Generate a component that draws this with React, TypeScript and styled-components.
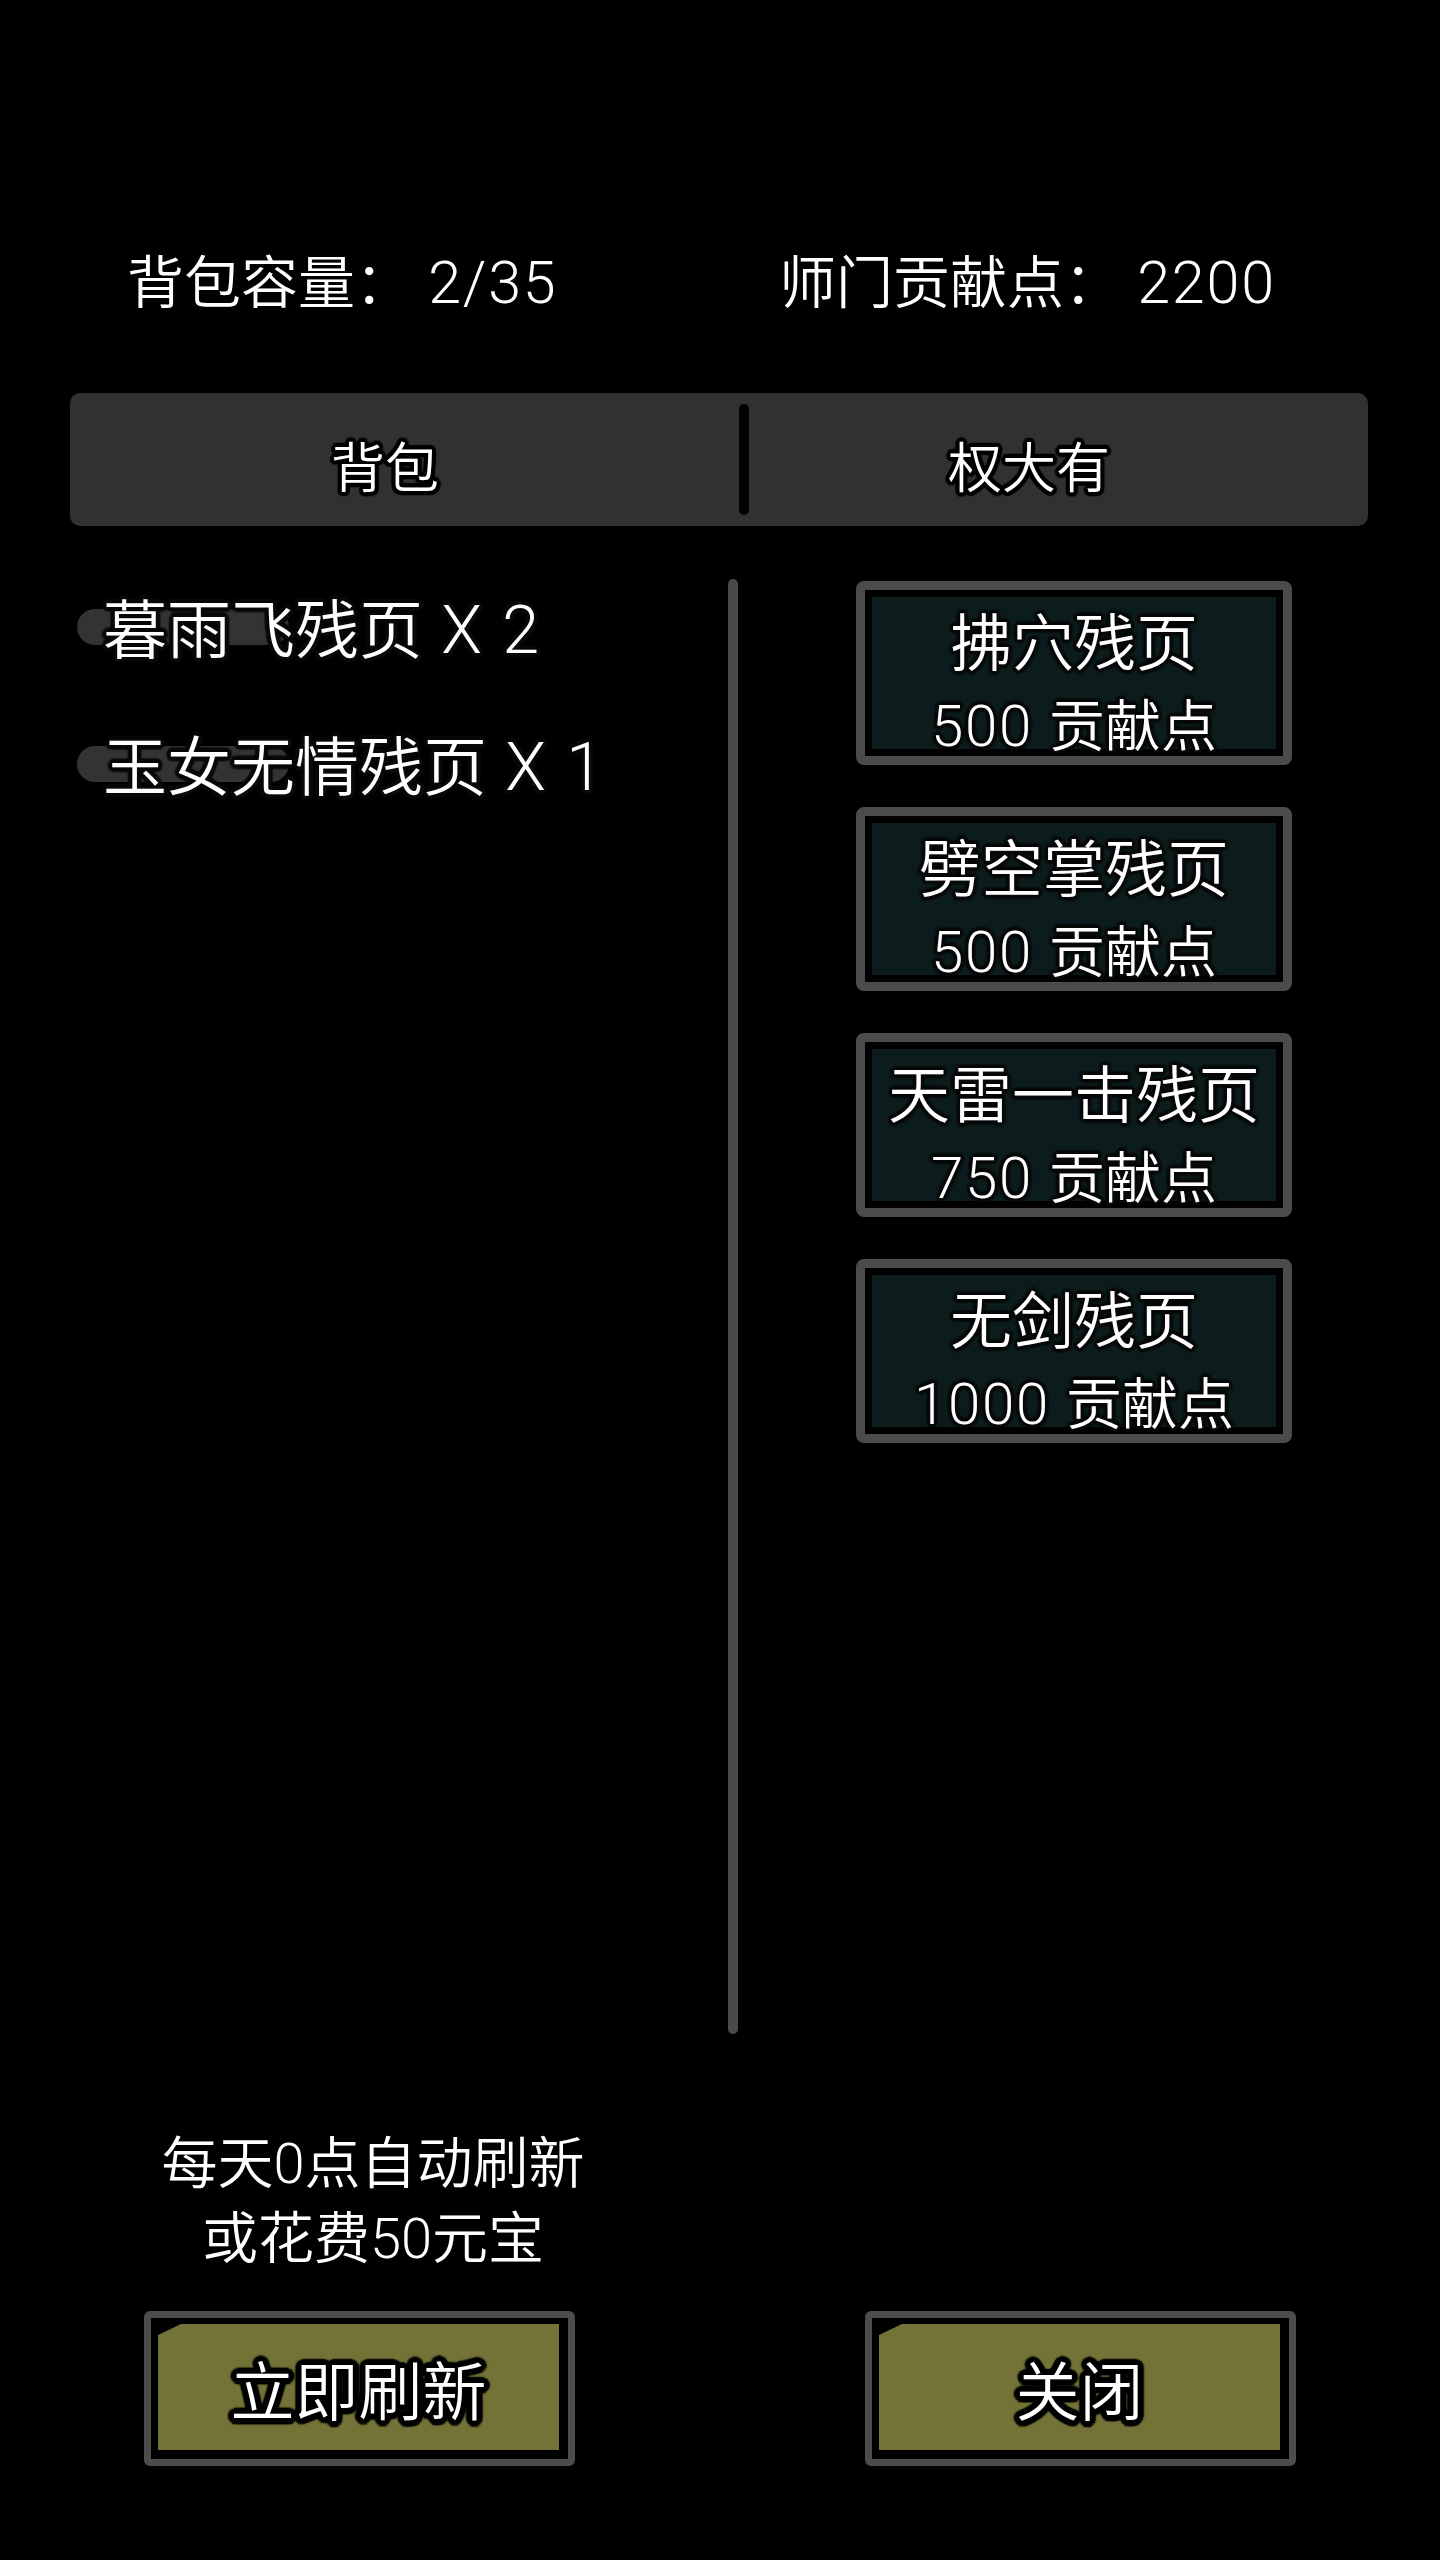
import React from "react";
import styled, { createGlobalStyle } from "styled-components";

const outline = (r: number, blur = 1, color = "#000") =>
  Array.from({ length: 16 }, (_, i) => {
    const a = (i * Math.PI) / 8;
    return `${(Math.cos(a) * r).toFixed(1)}px ${(Math.sin(a) * r).toFixed(1)}px ${blur}px ${color}`;
  }).join(", ");

const Global = createGlobalStyle`
  html, body { margin: 0; padding: 0; background: #000; }
  body {
    font-family: Roboto, "Noto Sans CJK SC", sans-serif;
    font-weight: 350;
    color: #fff;
  }
  * { box-sizing: border-box; }
`;

const Page = styled.div`
  width: 1440px;
  min-height: 2560px;
  background: #000;
  display: flex;
  flex-direction: column;
`;

const Latin = styled.span`
  font-size: 1.04em;
  letter-spacing: 0.03em;
`;

const Header = styled.div`
  display: flex;
  padding: 244px 0 0 127px;
  font-size: 57px;
  line-height: 78px;
  white-space: pre;
`;

const HeaderStat = styled.div<{ $width?: number }>`
  width: ${(p) => (p.$width ? `${p.$width}px` : "auto")};
`;

const TabBar = styled.div`
  margin: 70px 72px 0 70px;
  height: 133px;
  background: #313131;
  border-radius: 10px;
  display: grid;
  grid-template-columns: 669px 10px 1fr;
  align-items: center;
`;

const TabLabel = styled.div<{ $shift: number }>`
  text-align: center;
  padding-right: ${(p) => p.$shift}px;
  padding-top: 20px;
  font-size: 54px;
  line-height: 64px;
  text-shadow: ${outline(4, 1)};
`;

const TabDivider = styled.div`
  height: 111px;
  background: #000;
  border-radius: 5px;
`;

const Content = styled.div`
  margin-top: 53px;
  display: grid;
  grid-template-columns: 658px 10px 1fr;
  padding-left: 70px;
  height: 1455px;
`;

const ItemList = styled.div`
  padding-top: 8px;
  display: flex;
  flex-direction: column;
  gap: 49px;
`;

const Item = styled.div`
  position: relative;
  padding-left: 33px;
  font-size: 64px;
  line-height: 86px;
  white-space: pre;
  &::before {
    content: "";
    position: absolute;
    left: 7px;
    top: 50%;
    margin-top: -22px;
    width: 212px;
    height: 36px;
    border-radius: 18px;
    background: #333;
  }
`;

const ItemText = styled.span`
  position: relative;
  text-shadow: ${outline(4, 1.5, "#0a0a0a")};
`;

const ScrollTrack = styled.div`
  width: 10px;
  height: 100%;
  background: #4a4a4a;
  border-radius: 5px;
`;

const ShopColumn = styled.div`
  padding: 2px 0 0 118px;
  display: flex;
  flex-direction: column;
  gap: 42px;
`;

const ShopCard = styled.div`
  width: 436px;
  height: 184px;
  border: 9px solid #4b4b4b;
  border-radius: 8px;
  padding: 7px;
  background: #000;
`;

const CardFace = styled.div`
  height: 100%;
  background: #0c1c1c;
  display: flex;
  flex-direction: column;
  align-items: center;
  justify-content: center;
  padding-top: 22px;
  white-space: pre;
`;

const CardTitle = styled.div`
  font-size: 62px;
  line-height: 66px;
  text-shadow: ${outline(3, 1.5, "#0a0a0a")};
`;

const CardPrice = styled.div`
  margin-top: 18px;
  font-size: 56px;
  line-height: 60px;
  text-shadow: ${outline(3, 1.5, "#0a0a0a")};
`;

const Note = styled.div`
  margin: 93px 0 0 145px;
  width: 456px;
  text-align: center;
  font-size: 56px;
  line-height: 75px;
`;

const ButtonRow = styled.div`
  margin-top: 34px;
  padding-left: 144px;
  display: flex;
  gap: 290px;
`;

const GameButton = styled.div`
  width: 431px;
  height: 155px;
  border: 7px solid #4d4d4d;
  border-radius: 6px;
  background: #000;
  padding: 6px 9px 9px 7px;
`;

const ButtonFace = styled.div`
  height: 100%;
  background: #737338;
  clip-path: polygon(23px 0, 100% 0, 100% 100%, 0 100%, 0 11px);
  display: flex;
  align-items: center;
  justify-content: center;
  font-size: 64px;
  line-height: 70px;
  padding-top: 14px;
  text-shadow: ${outline(6, 1.5)};
`;

const items = [
  { name: "暮雨飞残页", count: 2 },
  { name: "玉女无情残页", count: 1 },
];

const shop = [
  { name: "拂穴残页", price: 500 },
  { name: "劈空掌残页", price: 500 },
  { name: "天雷一击残页", price: 750 },
  { name: "无剑残页", price: 1000 },
];

export default function App() {
  return (
    <>
      <Global />
      <Page>
        <Header>
          <HeaderStat $width={652}>
            背包容量：<Latin> 2/35</Latin>
          </HeaderStat>
          <HeaderStat>
            师门贡献点：<Latin> 2200</Latin>
          </HeaderStat>
        </Header>
        <TabBar>
          <TabLabel $shift={39}>背包</TabLabel>
          <TabDivider />
          <TabLabel $shift={59}>权大有</TabLabel>
        </TabBar>
        <Content>
          <ItemList>
            {items.map((it) => (
              <Item key={it.name}>
                <ItemText>
                  {it.name}
                  <Latin>{` X ${it.count}`}</Latin>
                </ItemText>
              </Item>
            ))}
          </ItemList>
          <ScrollTrack />
          <ShopColumn>
            {shop.map((s) => (
              <ShopCard key={s.name}>
                <CardFace>
                  <CardTitle>{s.name}</CardTitle>
                  <CardPrice>
                    <Latin>{`${s.price} `}</Latin>贡献点
                  </CardPrice>
                </CardFace>
              </ShopCard>
            ))}
          </ShopColumn>
        </Content>
        <Note>
          每天0点自动刷新
          <br />
          或花费50元宝
        </Note>
        <ButtonRow>
          <GameButton>
            <ButtonFace>立即刷新</ButtonFace>
          </GameButton>
          <GameButton>
            <ButtonFace>关闭</ButtonFace>
          </GameButton>
        </ButtonRow>
      </Page>
    </>
  );
}
